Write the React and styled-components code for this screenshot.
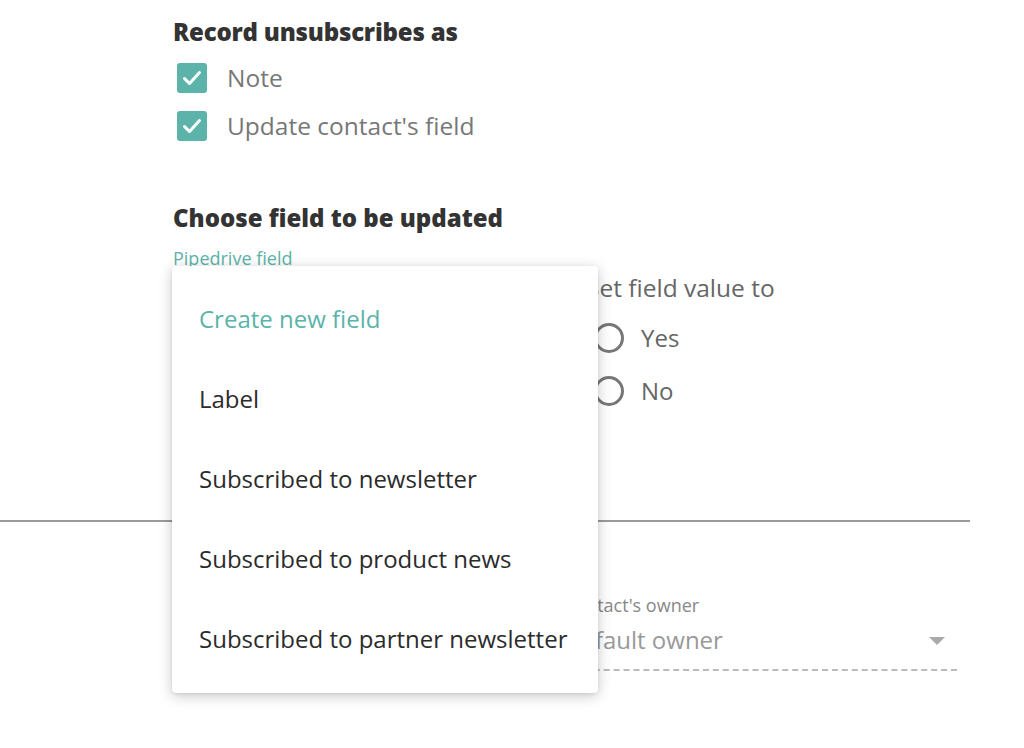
import React from "react";
import styled, { createGlobalStyle } from "styled-components";

const teal = "#5bb3a9";

const GlobalStyle = createGlobalStyle`
  html, body {
    margin: 0;
    padding: 0;
    background: #fff;
  }
  body {
    font-family: "Open Sans", "Noto Sans", "Liberation Sans", sans-serif;
    -webkit-font-smoothing: antialiased;
  }
`;

const Page = styled.div`
  width: 1024px;
  height: 748px;
  overflow: hidden;
  padding-top: 17px;
  box-sizing: border-box;
`;

const Section = styled.section`
  padding-left: 173px;
`;

const Heading = styled.h2`
  margin: 0;
  font-size: 24px;
  line-height: 30px;
  font-weight: 800;
  color: #333;
  letter-spacing: ${(p) => p.$spacing || "0"};
`;

const CheckList = styled.div`
  display: flex;
  flex-direction: column;
  gap: 18px;
  margin-top: 16px;
  padding-left: 4px;
`;

const CheckRow = styled.label`
  display: flex;
  align-items: center;
  gap: 20px;
  font-size: 24.5px;
  line-height: 30px;
  color: #777;
`;

const Box = styled.span`
  width: 30px;
  height: 30px;
  border-radius: 3px;
  background: ${teal};
  display: flex;
  align-items: center;
  justify-content: center;
`;

const Checkbox = ({ children }) => (
  <CheckRow>
    <Box>
      <svg width="24" height="24" viewBox="0 0 24 24">
        <path d="M4.5 12.5l5 5 10-11" fill="none" stroke="#fff" strokeWidth="3" strokeLinecap="round" strokeLinejoin="round" />
      </svg>
    </Box>
    {children}
  </CheckRow>
);

const FieldSection = styled(Section)`
  margin-top: 62px;
`;

const Columns = styled.div`
  display: grid;
  grid-template-columns: 413px 1fr;
  margin-top: 15px;
`;

const SelectWrap = styled.div`
  position: relative;
`;

const SmallLabel = styled.div`
  font-size: 18px;
  line-height: 20px;
  color: ${(p) => p.$color || "#888"};
`;

const Menu = styled.ul`
  position: absolute;
  top: 18px;
  left: -1px;
  width: 426px;
  margin: 0;
  padding: 12px 0 15px;
  list-style: none;
  background: #fff;
  border-radius: 4px;
  box-shadow: 0 3px 14px rgba(0, 0, 0, 0.22), 0 1px 3px rgba(0, 0, 0, 0.08);
  z-index: 10;
`;

const MenuItem = styled.li`
  height: 80px;
  display: flex;
  align-items: center;
  padding-left: 27px;
  font-size: 24px;
  color: ${(p) => (p.$accent ? teal : "#2b2b2b")};
`;

const ValueGroup = styled.div`
  padding-top: 25px;
`;

const GroupTitle = styled.div`
  font-size: 24.5px;
  line-height: 30px;
  color: #666;
`;

const RadioList = styled.div`
  display: flex;
  flex-direction: column;
  gap: 23px;
  margin-top: 20px;
  padding-left: 8px;
`;

const RadioRow = styled.label`
  display: flex;
  align-items: center;
  gap: 17px;
  font-size: 24px;
  line-height: 30px;
  color: #666;
`;

const Circle = styled.span`
  width: 24px;
  height: 24px;
  border: 3px solid #777;
  border-radius: 50%;
`;

const Divider = styled.hr`
  width: 970px;
  margin: 114px 0 0;
  border: 0;
  border-top: 2px solid #9b9b9b;
`;

const OwnerSection = styled(Section)`
  display: grid;
  grid-template-columns: 391px 393px;
  margin-top: 73px;
`;

const Select = styled.div`
  display: flex;
  flex-direction: column;
`;

const SelectValue = styled.div`
  display: flex;
  align-items: center;
  justify-content: space-between;
  height: 36px;
  margin-top: 6px;
  padding: 0 12px 12px 0;
  font-size: 24px;
  color: #999;
  border-bottom: 2px dashed #bbb;
`;

const Caret = styled.span`
  width: 0;
  height: 0;
  margin-top: 4px;
  border-left: 8px solid transparent;
  border-right: 8px solid transparent;
  border-top: 8px solid #aaa;
`;

export default function App() {
  return (
    <Page>
      <GlobalStyle />
      <Section>
        <Heading $spacing="-0.2px">Record unsubscribes as</Heading>
        <CheckList>
          <Checkbox>Note</Checkbox>
          <Checkbox>Update contact's field</Checkbox>
        </CheckList>
      </Section>

      <FieldSection>
        <Heading $spacing="0">Choose field to be updated</Heading>
        <Columns>
          <SelectWrap>
            <SmallLabel $color={teal}>Pipedrive field</SmallLabel>
            <Menu>
              <MenuItem $accent>Create new field</MenuItem>
              <MenuItem>Label</MenuItem>
              <MenuItem>Subscribed to newsletter</MenuItem>
              <MenuItem>Subscribed to product news</MenuItem>
              <MenuItem>Subscribed to partner newsletter</MenuItem>
            </Menu>
          </SelectWrap>
          <ValueGroup>
            <GroupTitle>Set field value to</GroupTitle>
            <RadioList>
              <RadioRow>
                <Circle />
                Yes
              </RadioRow>
              <RadioRow>
                <Circle />
                No
              </RadioRow>
            </RadioList>
          </ValueGroup>
        </Columns>
      </FieldSection>

      <Divider />

      <OwnerSection>
        <div />
        <Select>
          <SmallLabel>Contact's owner</SmallLabel>
          <SelectValue>
            Default owner
            <Caret />
          </SelectValue>
        </Select>
      </OwnerSection>
    </Page>
  );
}
